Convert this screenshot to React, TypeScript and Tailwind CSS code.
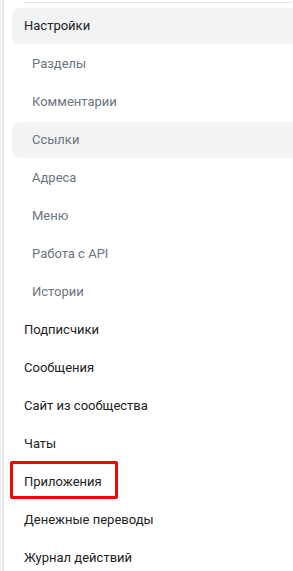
import React from "react";

type Item = {
  label: string;
  sub?: boolean;
  active?: boolean;
  marked?: boolean;
};

const items: Item[] = [
  { label: "Настройки", active: true },
  { label: "Разделы", sub: true },
  { label: "Комментарии", sub: true },
  { label: "Ссылки", sub: true, active: true },
  { label: "Адреса", sub: true },
  { label: "Меню", sub: true },
  { label: "Работа с API", sub: true },
  { label: "Истории", sub: true },
  { label: "Подписчики" },
  { label: "Сообщения" },
  { label: "Сайт из сообщества" },
  { label: "Чаты" },
  { label: "Приложения", marked: true },
  { label: "Денежные переводы" },
  { label: "Журнал действий" },
];

const App = () => {
  return (
    <div
      className="flex h-[571px] w-[293px] overflow-hidden bg-white text-[13px] leading-4"
      style={{ fontFamily: "Roboto, 'Liberation Sans', sans-serif" }}
    >
      <div className="w-[3px] shrink-0 bg-[#f0f1f3]" />
      <div className="w-px shrink-0 bg-[#e1e3e6]" />
      <div className="flex-1 min-w-0">
        <div className="mt-[2px] ml-5 mr-[2px] h-px bg-[#dfe3e8]" />
        <nav className="mt-[5px] flex flex-col gap-[2px] pl-2">
          {items.map((item) => (
            <div
              key={item.label}
              className={[
                "relative flex h-[36px] items-center rounded-l-lg",
                item.sub ? "pl-5 text-[#6a7480]" : "pl-3 text-[#222]",
                item.active ? "bg-[#f2f3f5]" : "",
              ].join(" ")}
            >
              {item.label}
              {item.marked && (
                <span className="absolute -left-[2px] -top-[3px] h-[38px] w-[108px] rounded-[2px] border-[3px] border-[#ff0000]" />
              )}
            </div>
          ))}
        </nav>
      </div>
    </div>
  );
};

export default App;
